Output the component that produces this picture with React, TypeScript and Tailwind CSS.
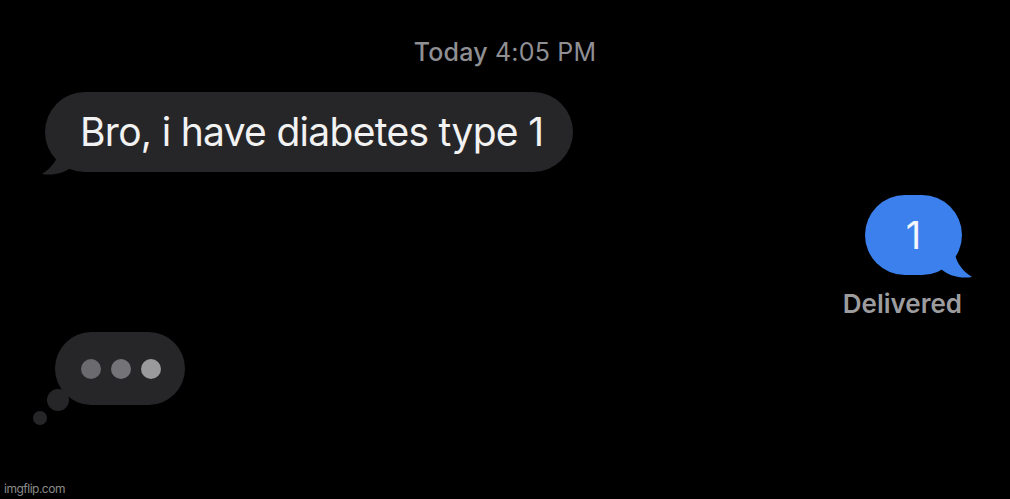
export default function App() {
  return (
    <div
      className="relative w-[1010px] h-[499px] overflow-hidden bg-black flex flex-col"
      style={{ fontFamily: "Inter, 'Noto Sans', sans-serif" }}
    >
      {/* timestamp */}
      <div className="pt-[37px] text-center text-[25px] leading-[30px] text-[#8f8f94] tracking-[0.2px]">
        <span className="font-medium">Today</span> 4:05 PM
      </div>

      {/* incoming message */}
      <div className="mt-[25px] pl-[45px] flex">
        <div className="relative">
          <svg
            className="absolute left-[-5px] bottom-[-5px]"
            width="40"
            height="34"
            viewBox="0 0 40 34"
          >
            <path d="M20 0 C20 14 13 24 2 31 C13 33 25 30 33 23 L33 0 Z" fill="#262629" />
          </svg>
          <div className="relative h-[80px] pl-[35px] pr-[30px] rounded-[40px] bg-[#262629] flex items-center text-[39px] text-[#f2f2f2] tracking-[-0.7px]">
            Bro, i have diabetes type 1
          </div>
        </div>
      </div>

      {/* outgoing message */}
      <div className="mt-[23px] pr-[48px] flex justify-end">
        <div className="relative">
          <svg
            className="absolute right-[-12px] bottom-[-5px]"
            width="40"
            height="34"
            viewBox="0 0 40 34"
          >
            <path d="M20 0 C20 14 27 24 38 31 C27 33 15 30 7 23 L7 0 Z" fill="#3b80ec" />
          </svg>
          <div className="relative w-[97px] h-[80px] rounded-[40px] bg-[#3b80ec] flex items-center justify-center text-[38px] text-[#f4f6fb]">
            1
          </div>
        </div>
      </div>
      <div className="mt-[14px] pr-[48px] text-right text-[26px] leading-[30px] font-semibold text-[#9c9c9f]">
        Delivered
      </div>

      {/* typing indicator */}
      <div className="mt-[13px] pl-[55px] flex">
        <div className="relative">
          <div className="absolute left-[-8px] bottom-[-6px] w-[22px] h-[22px] rounded-full bg-[#262629]" />
          <div className="absolute left-[-22px] bottom-[-20px] w-[14px] h-[14px] rounded-full bg-[#262629]" />
          <div className="relative w-[130px] h-[73px] rounded-[37px] bg-[#262629] flex items-center justify-center gap-[10px] pl-[2px] pt-[1px]">
            <span className="w-[20px] h-[20px] rounded-full bg-[#6b6b6f]" />
            <span className="w-[20px] h-[20px] rounded-full bg-[#747478]" />
            <span className="w-[20px] h-[20px] rounded-full bg-[#9a9a9d]" />
          </div>
        </div>
      </div>

      {/* watermark */}
      <div className="mt-auto pb-[3px] pl-[4px] text-[12px] leading-[14px] text-[#8a8a8a] tracking-[-0.5px]">
        imgflip.com
      </div>
    </div>
  );
}
